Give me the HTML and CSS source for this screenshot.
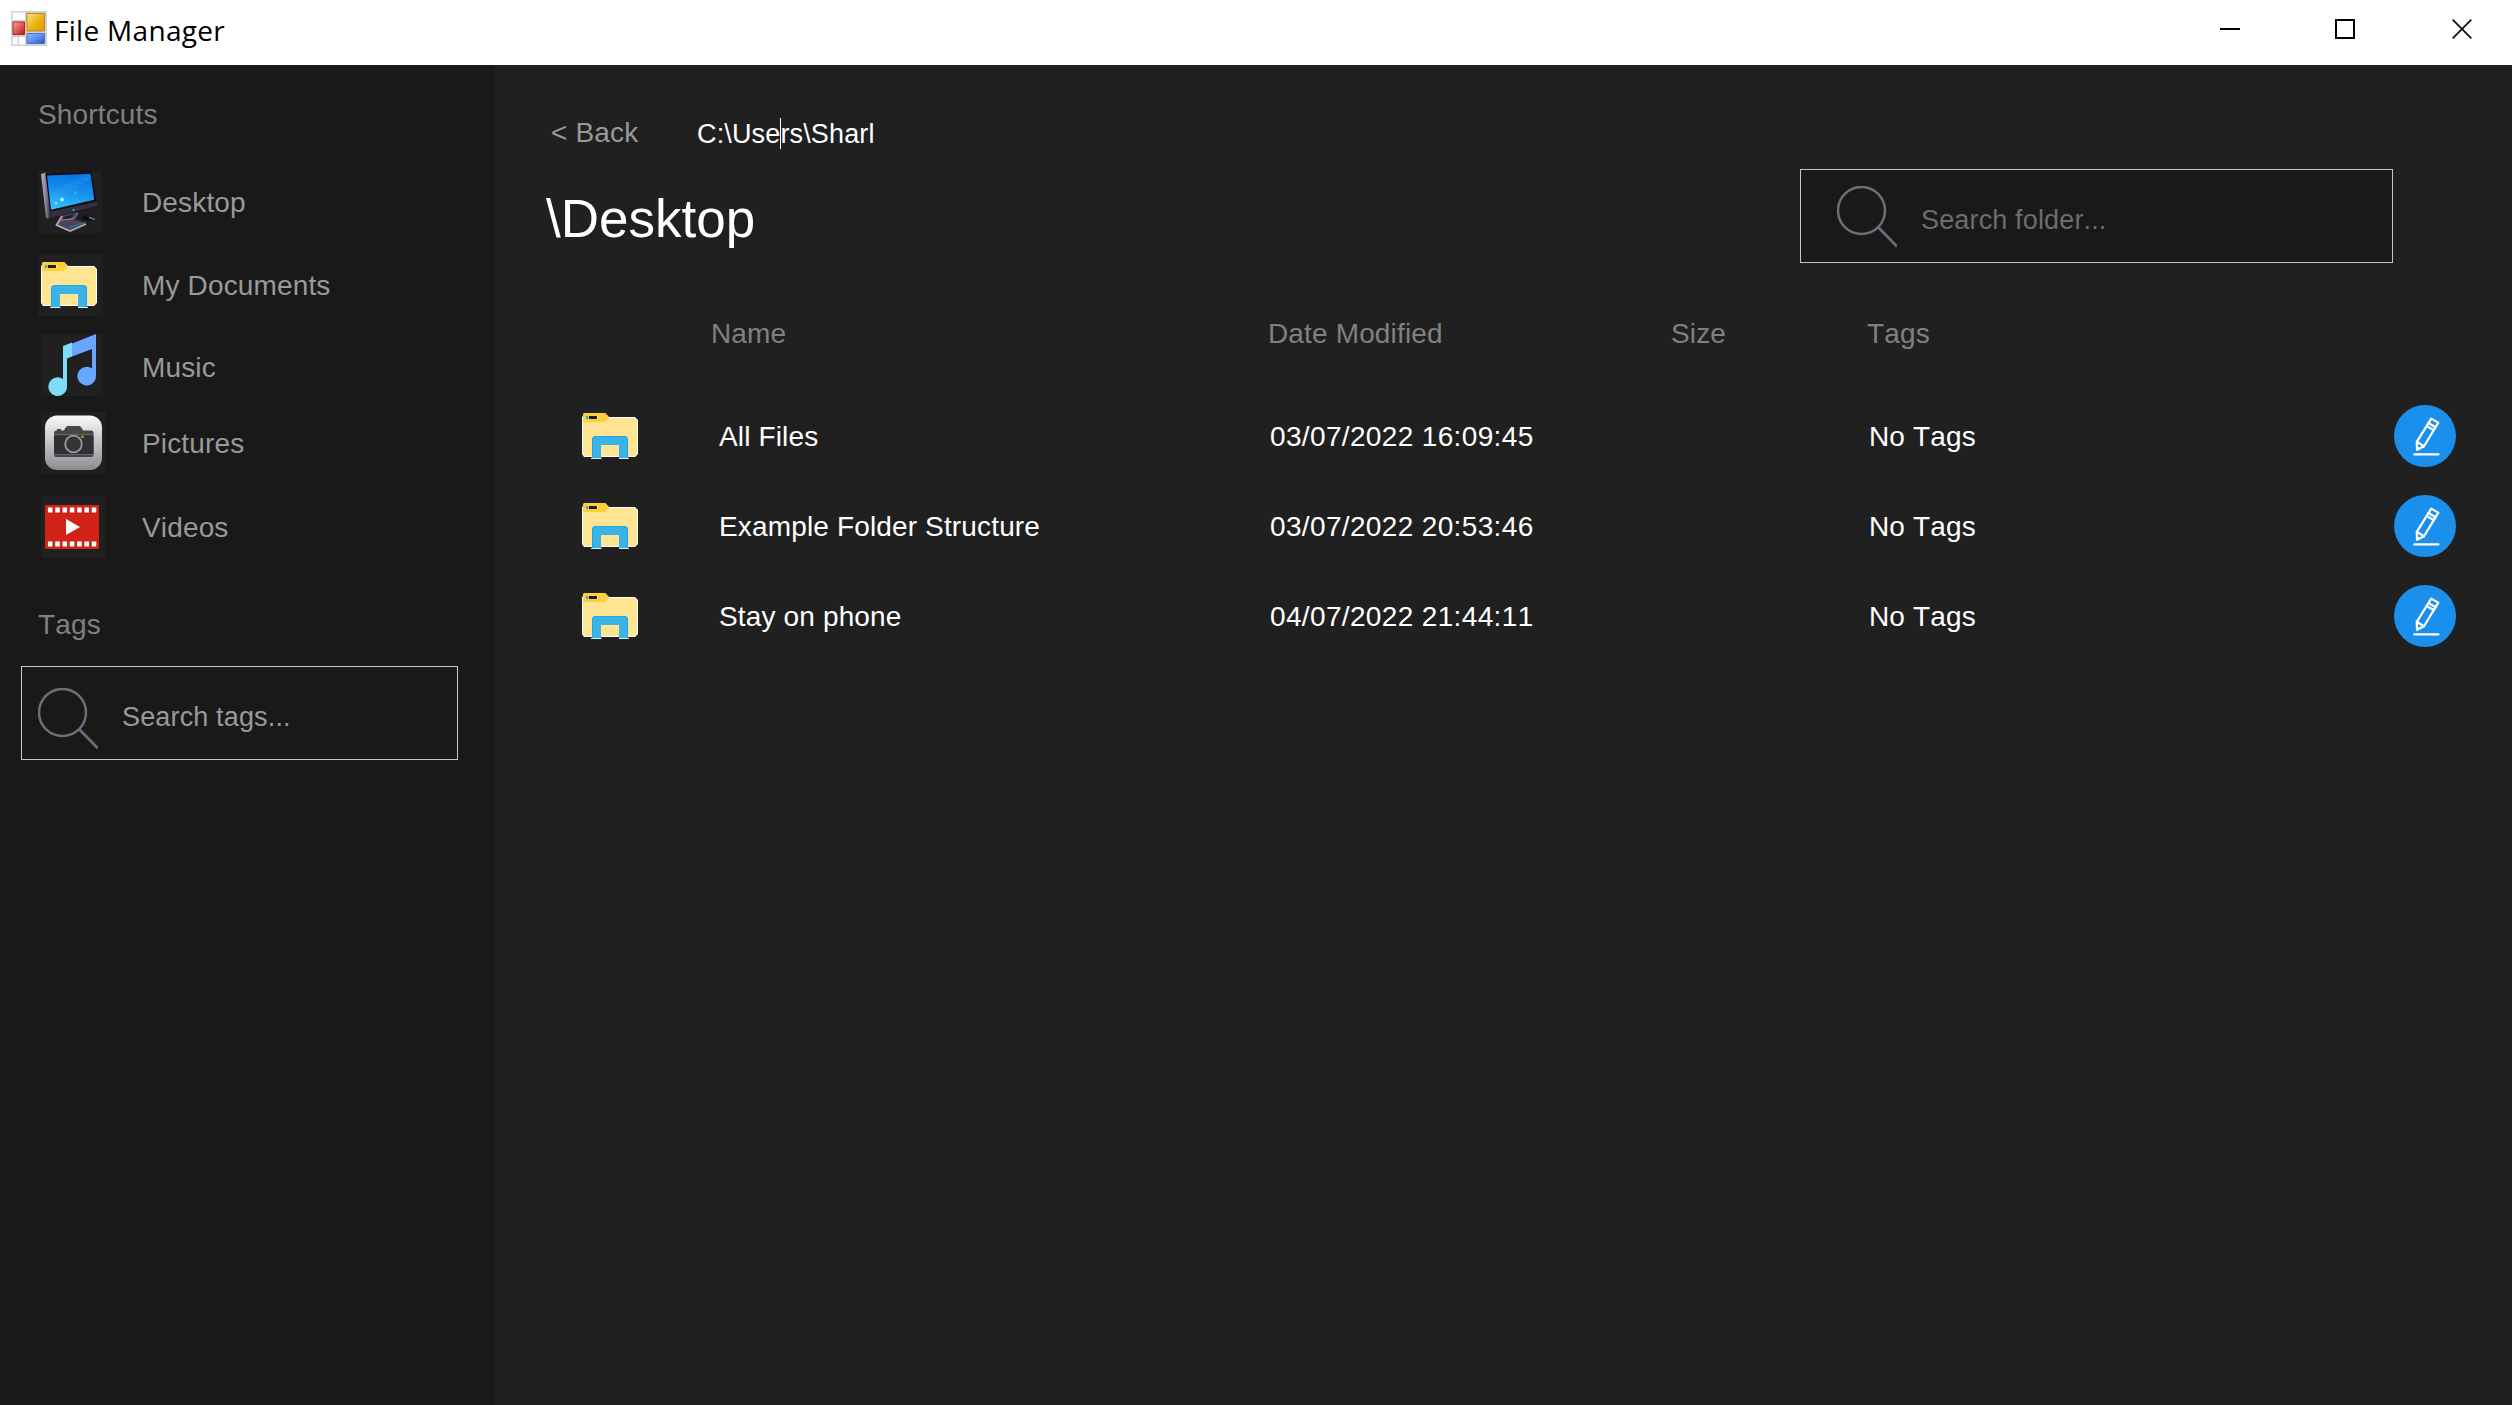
FILE: index.html
```html
<!DOCTYPE html>
<html lang="en">
<head>
<meta charset="utf-8">
<title>File Manager</title>
<link rel="stylesheet" href="styles.css">
</head>
<body>
<svg class="defs" width="0" height="0" aria-hidden="true">
  <defs>
    <linearGradient id="gold" x1="0" y1="0" x2="1" y2="1"><stop offset="0" stop-color="#fbe58a"/><stop offset=".55" stop-color="#edb10c"/><stop offset="1" stop-color="#e09a00"/></linearGradient>
    <linearGradient id="red" x1="0" y1="0" x2="1" y2="1"><stop offset="0" stop-color="#f3a6a0"/><stop offset="1" stop-color="#c41410"/></linearGradient>
    <linearGradient id="blue" x1="0" y1="0" x2="1" y2="1"><stop offset="0" stop-color="#8fb4ff"/><stop offset=".5" stop-color="#5c90f5"/><stop offset="1" stop-color="#2450ac"/></linearGradient>
    <linearGradient id="screen" x1=".6" y1="0" x2=".4" y2="1"><stop offset="0" stop-color="#0872e4"/><stop offset=".5" stop-color="#1690ee"/><stop offset="1" stop-color="#30c4f8"/></linearGradient>
    <linearGradient id="bezel" x1="0" y1="0" x2="1" y2="0"><stop offset="0" stop-color="#b9adc8"/><stop offset=".5" stop-color="#8a8098"/><stop offset="1" stop-color="#221f2a"/></linearGradient>
    <linearGradient id="silver" x1="0" y1="0" x2="0" y2="1"><stop offset="0" stop-color="#fbfbfc"/><stop offset="1" stop-color="#8b8b92"/></linearGradient>
    <symbol id="folder" viewBox="0 0 56 46">
      <path d="M3 1 23 0 27 4H53L56 7V41L53 44H2L0 41V4Z" fill="#fff"/>
      <path d="M1 5H52.500L55 7.500V40.500L52.500 43H3L1 41Z" fill="#ffe591"/>
      <path d="M2 0H23L27 4.500 23 9H1V1Z" fill="#ffcf3a"/>
      <path d="M4 3H16V6H4Z" fill="#ffeeb8"/><path d="M7 3H15V6H7Z" fill="#202020"/><path d="M4 3H6.500V6H4Z" fill="#35aee4"/>
      <path d="M9 45H19.500V46H9ZM37 45H47V46H37Z" fill="#d9f1fb"/>
      <path d="M10 45V26.500Q10 23 13.500 23H42.500Q46 23 46 26.500V45H37V32H19V45Z" fill="#39b3e8"/>
      <path d="M10.500 45V27Q10.500 23.500 14 23.500H42Q45.500 23.500 45.500 27V45" fill="none" stroke="#20a7e2"/>
    </symbol>
    <symbol id="search" viewBox="0 0 60 62">
      <circle cx="24.500" cy="24.500" r="23.500" fill="none" stroke="#6c6c7a" stroke-width="2.500"/>
      <path d="M41 41 60 60.500" fill="none" stroke="#6c6c7a" stroke-width="2.700"/>
    </symbol>
    <symbol id="edit" viewBox="0 0 62 62">
      <circle cx="31" cy="31" r="31" fill="#1a8fec"/>
      <g fill="none" stroke="#fff" stroke-width="2.200" stroke-linejoin="round" stroke-linecap="round">
        <path d="M37.200 13.600 44.300 17.600 30 41.200 23 44.800 22.800 36.800Z"/>
        <path d="M34.500 18 41.600 22.200M32.800 21 39.800 25.200M22.800 36.800 30 41.200"/>
        <path d="M20.300 49.300H44.500"/>
      </g>
      <path d="M22.800 41 26.200 43.200 23 44.800Z" fill="#fff"/>
    </symbol>
  </defs>
</svg>

<div class="window">
  <header class="titlebar">
    <svg class="app-icon" width="36" height="35" viewBox="0 0 36 35">
      <path d="M0 0H36V35H0Z" fill="#d0d0d0"/>
      <path d="M1.500 1.500H14V9H1.500ZM1.500 26H6.500V33.500H1.500ZM8 26H14V33.500H8Z" fill="#fff"/>
      <path d="M2 11H13.500V23.500H2Z" fill="url(#red)" stroke="#b3221c"/>
      <path d="M16 2.500H33.500V20H16Z" fill="url(#gold)" stroke="#b98a1a"/>
      <path d="M16 22.500H33.500V32.500H16Z" fill="url(#blue)" stroke="#4a76cf"/>
    </svg>
    <span class="app-title">File Manager</span>
    <div class="window-buttons">
      <svg width="20" height="20" viewBox="0 0 20 20"><path d="M0 9H20V11H0Z" fill="#000"/></svg>
      <svg width="20" height="20" viewBox="0 0 20 20"><path d="M1 1H19V19H1Z" fill="none" stroke="#000" stroke-width="2"/></svg>
      <svg class="close" width="20" height="20" viewBox="0 0 20 20"><path d="M.7.700 19.300 19.300M19.300.700.700 19.300" fill="none" stroke="#111" stroke-width="1.800"/></svg>
    </div>
  </header>

  <div class="body">
    <aside class="sidebar">
      <h2 class="section-title">Shortcuts</h2>
      <nav class="shortcuts">
        <a class="shortcut">
          <span class="tile tile-desktop">
            <svg width="64" height="62" viewBox="0 0 64 62">
              <path d="M3 2 54 0 59 35 56 37 11 48 9 47Z" fill="#17151d"/>
              <path d="M3 3 7.500 1.500 13 46 10 48 8 46.500Z" fill="url(#bezel)"/>
              <path d="M7.500 3.500 53 2 57.500 29 12.500 39.500Z" fill="#050509"/>
              <path d="M9 4.500 52.500 2.800 56.300 28.800 13 38.800Z" fill="url(#screen)"/>
              <path d="M11 24 44 4 52 3 53 8 12 34Z" fill="#4db8ff" opacity=".14"/>
              <path d="M12.500 40.500 59 31V35L12.500 47Z" fill="#34303e"/>
              <circle cx="35.500" cy="39" r="1.300" fill="#1697b8"/>
              <circle cx="24" cy="28.500" r="2" fill="#a9f4ff"/><circle cx="18" cy="32" r="1.200" fill="#8eeeff"/><circle cx="37.500" cy="21.500" r="1.300" fill="#27c5ff"/><circle cx="49" cy="8" r=".8" fill="#39a8ff"/>
              <path d="M24 44.500 40 41 36 48.500 48 52 32 59.500 18.500 54Z" fill="#4b4559"/>
              <path d="M26 46 36 43 33 47.500 24 48.500Z" fill="#1d1a24"/>
              <path d="M24 45 18.500 54 32 60 48 53" fill="none" stroke="#b4a8c5" stroke-width="1.800"/>
              <path d="M40 42 36.500 47.500 23 49" fill="none" stroke="#9388a4" stroke-width="1"/>
              <path d="M31 56.500 47 51.500" stroke="#257e9b" stroke-width="1.200"/>
              <path d="M44 46Q46 43 50 46L56 48Q57 50 54 50L48 49Q44 49 44 46Z" fill="#0b0b10"/><path d="M51 46.500 56.500 48.500" stroke="#697083" stroke-width="1.500"/>
            </svg>
          </span>
          <span class="label">Desktop</span>
        </a>
        <a class="shortcut shortcut-documents">
          <span class="tile tile-documents"><svg width="56" height="46"><use href="#folder"/></svg></span>
          <span class="label">My Documents</span>
        </a>
        <a class="shortcut shortcut-music">
          <span class="tile tile-music">
            <svg width="62" height="62" viewBox="0 0 62 62">
              <path d="M31 9.500 55 0V42A9.300 9.300 0 1 1 51 34.500V15L31 22.500Z" fill="#68a6ff"/>
              <path d="M22 12 31 8.500V22.500L26 24.500V53A9.300 9.300 0 1 1 22 45Z" fill="#80dbfa"/>
            </svg>
          </span>
          <span class="label">Music</span>
        </a>
        <a class="shortcut shortcut-pictures">
          <span class="tile tile-media">
            <svg width="65" height="62" viewBox="0 0 65 62">
              <rect x="4" y="3.500" width="57" height="54.500" rx="12" fill="url(#silver)"/>
              <path d="M13 21Q13 18.500 15 18.500H16V17H20V18.500H23Q25 14 27 14H38Q40 14 42 18.500H50Q52.500 18.500 52.500 21V43Q52.500 45 50.500 45H15Q13 45 13 43Z" fill="#464649"/>
              <path d="M13 23.500H52.500V42H13Z" fill="#303033"/>
              <path d="M13 22.500H52.500M13 42.500H52.500" stroke="#6b6b6e" stroke-width=".8"/>
              <circle cx="32.500" cy="32" r="8.300" fill="#343436" stroke="#9b9b9b" stroke-width="1.800"/>
              <path d="M40 23.500H43V26H40Z" fill="#a67914"/>
            </svg>
          </span>
          <span class="label">Pictures</span>
        </a>
        <a class="shortcut shortcut-videos">
          <span class="tile tile-media">
            <svg width="65" height="62" viewBox="0 0 65 62">
              <rect x="4" y="9" width="54" height="44" rx="1" fill="#d22115"/>
              <path d="M9.200 11.500V16.500M16.500 11.500V16.500M23.800 11.500V16.500M31.100 11.500V16.500M38.400 11.500V16.500M45.700 11.500V16.500M53 11.500V16.500M9.200 45.500V50.500M16.500 45.500V50.500M23.800 45.500V50.500M31.100 45.500V50.500M38.400 45.500V50.500M45.700 45.500V50.500M53 45.500V50.500" stroke="#fff" stroke-width="4.600"/>
              <path d="M25 23 39 31 25 39Z" fill="#fff"/>
            </svg>
          </span>
          <span class="label">Videos</span>
        </a>
      </nav>
      <h2 class="section-title section-tags">Tags</h2>
      <div class="search search-tags">
        <svg width="60" height="62"><use href="#search"/></svg>
        <span class="search-text">Search tags...</span>
      </div>
    </aside>

    <main class="content">
      <div class="topbar">
        <div class="location">
          <div class="path-row">
            <span class="back">&lt; Back</span>
            <span class="path">C:\Use<i class="caret"></i>rs\Sharl</span>
          </div>
          <h1 class="folder-title">\Desktop</h1>
        </div>
        <div class="search search-folder">
          <svg width="60" height="62"><use href="#search"/></svg>
          <span class="search-text">Search folder...</span>
        </div>
      </div>

      <div class="list-head">
        <span>Name</span><span>Date Modified</span><span>Size</span><span>Tags</span>
      </div>

      <div class="list">
        <div class="row">
          <svg width="56" height="46"><use href="#folder"/></svg>
          <span class="cell">All Files</span><span class="cell date">03/07/2022 16:09:45</span><span></span><span class="cell">No Tags</span>
          <svg width="62" height="62"><use href="#edit"/></svg>
        </div>
        <div class="row">
          <svg width="56" height="46"><use href="#folder"/></svg>
          <span class="cell">Example Folder Structure</span><span class="cell date">03/07/2022 20:53:46</span><span></span><span class="cell">No Tags</span>
          <svg width="62" height="62"><use href="#edit"/></svg>
        </div>
        <div class="row">
          <svg width="56" height="46"><use href="#folder"/></svg>
          <span class="cell">Stay on phone</span><span class="cell date">04/07/2022 21:44:11</span><span></span><span class="cell">No Tags</span>
          <svg width="62" height="62"><use href="#edit"/></svg>
        </div>
      </div>
    </main>
  </div>
</div>
</body>
</html>
```

FILE: styles.css
```css
* { box-sizing: border-box; }

body {
  margin: 0;
  background: #202020;
  font-family: "Liberation Sans", Arial, sans-serif;
  font-size: 28px;
  font-kerning: none;
  letter-spacing: 0.15px;
  line-height: 32px;
  white-space: nowrap;
}

svg { display: block; flex: none; }
.defs { position: absolute; }
h1, h2 { margin: 0; font-weight: normal; }

.window { display: flex; flex-direction: column; height: 100vh; overflow: hidden; }

/* Title bar */
.titlebar {
  display: flex;
  flex: none;
  height: 65px;
  padding: 0 40px 0 11px;
  background: #fff;
}
.app-icon { margin-top: 11px; }
.app-title {
  margin: 14px 0 0 7px;
  color: #000;
  font-family: "Open Sans", "Noto Sans", sans-serif;
  font-size: 28px;
  letter-spacing: 0.3px;
}
.window-buttons { display: flex; gap: 95px; margin: 19px 0 0 auto; }
.close { margin-left: 2px; }

.body { display: flex; flex: 1; }

/* Sidebar */
.sidebar { flex: none; width: 494px; padding-top: 34px; background: #191919; }
.section-title { margin-left: 38px; color: #808080; font-size: 28px; }
.section-tags { margin-top: 51px; }

.shortcuts { display: flex; flex-direction: column; margin-top: 40px; padding-left: 38px; }
.shortcut { display: flex; align-items: center; height: 62px; color: #999; }
.shortcut-documents { margin-top: 21px; }
.shortcut-music { margin-top: 18px; }
.shortcut-pictures { margin-top: 16px; }
.shortcut-videos { margin-top: 22px; }
.label { padding-top: 2px; }
.shortcut-music .label { padding-top: 5px; }

.tile { display: flex; flex: none; height: 62px; background: #202020; }
.tile-desktop { width: 64px; margin-right: 40px; }
.tile-documents { width: 65px; margin-right: 39px; padding: 8px 0 0 3px; }
.tile-music { width: 62px; margin: 0 39px 0 3px; }
.tile-media { width: 65px; margin: 0 36px 0 3px; }

.search {
  display: flex;
  flex: none;
  align-items: flex-start;
  height: 94px;
  border: 1px solid #c8c8c8;
  background: #191919;
  font-size: 27px;
}
.search-tags { width: 437px; margin: 16px 0 0 21px; padding: 21px 0 0 16px; color: #999; }
.section-tags + .search-tags { margin-top: 25px; }
.search-tags .search-text { margin: 13px 0 0 24px; }
.search-folder { width: 593px; margin-top: 104px; padding: 16px 0 0 36px; border-color: #c0c8c0; color: #6d6d6d; }
.search-folder .search-text { margin: 18px 0 0 24px; }

/* Folder view */
.content { display: flex; flex: 1; flex-direction: column; color: #fff; }
.topbar { display: flex; justify-content: space-between; height: 235px; padding: 0 119px 0 52px; }
.path-row { display: flex; padding: 52px 0 0 5px; }
.back { width: 146px; color: #999; }
.path { padding-top: 1px; font-size: 27px; }
.caret {
  display: inline-block;
  width: 1px;
  height: 31px;
  margin-right: -1px;
  background: #fff;
  vertical-align: -6px;
}
.folder-title { margin-top: 39px; font-size: 53px; line-height: 60px; letter-spacing: 0; }

.list-head {
  display: grid;
  grid-template-columns: 557px 403px 196px auto;
  height: 91px;
  padding: 18px 0 0 217px;
  color: #808080;
}

.row {
  display: grid;
  grid-template-columns: 137px 551px 401px 198px 525px 62px;
  align-items: center;
  height: 90px;
  padding-left: 88px;
}
.cell { padding-top: 2px; }
.date { letter-spacing: 0.35px; }
```
